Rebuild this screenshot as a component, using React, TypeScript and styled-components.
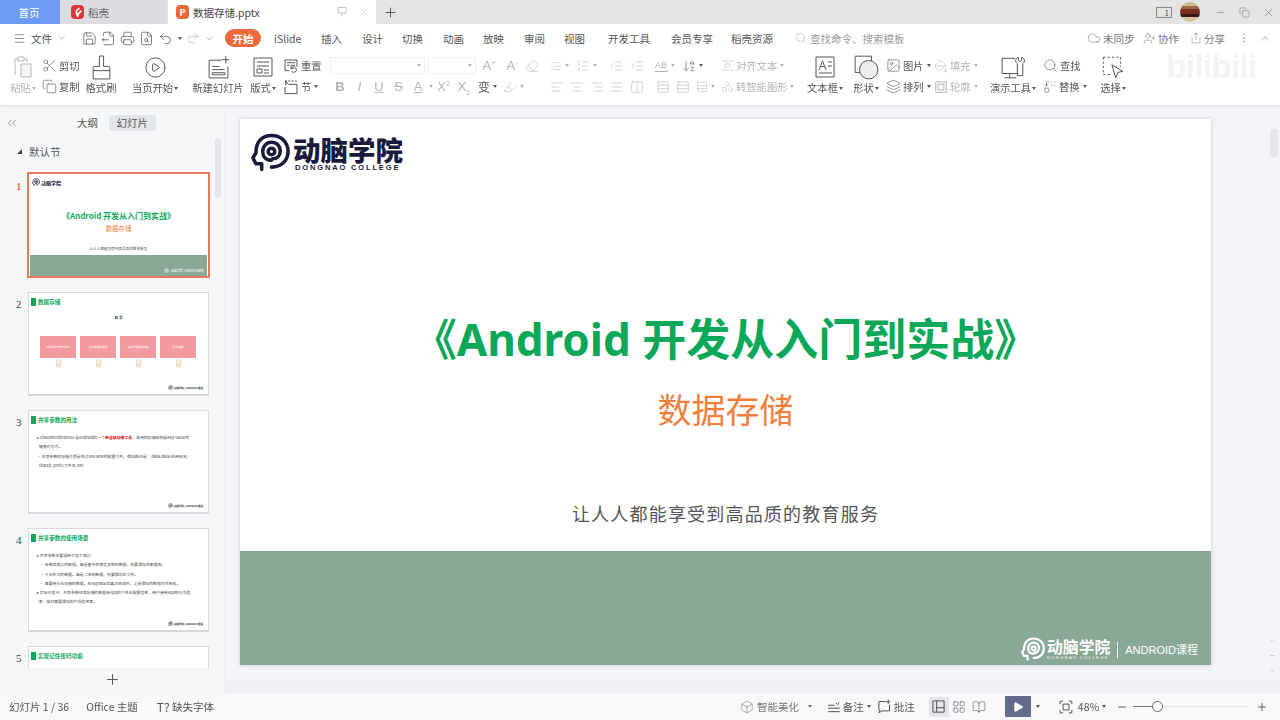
import React from "react";
import styled, { createGlobalStyle } from "styled-components";
import {
  Menu, Save, FileOutput, Printer, FileSearch, Undo2, Redo2, ChevronDown, ChevronUp, Scissors, Copy,
  CirclePlay, Eraser, List, ListOrdered, IndentDecrease,
  IndentIncrease, ArrowDownAZ, AlignLeft, AlignCenter, AlignRight, AlignJustify, Columns2, Rows3, Image, Layers,
  Search, Replace, Highlighter, Cloud, UserPlus, Share, MoreVertical,
  Minus, Plus, X, Box, LayoutGrid, BookOpen, Play, ChevronsLeft, Award,
  Shapes, AlignVerticalSpaceAround, PaintBucket,
} from "lucide-react";

const Global = createGlobalStyle`
  html, body { margin: 0; width: 1280px; height: 720px; overflow: hidden; background: #f3f4f7; }
  body, button { font-family: "Noto Sans CJK SC", "Noto Sans", sans-serif; }
  * { box-sizing: border-box; }
`;

const Page = styled.div`
  width: 1280px; height: 720px; display: flex; flex-direction: column; position: relative; overflow: hidden; color: #555;
  filter: blur(0.3px);
`;

/* ---------- tab bar ---------- */
const TabBar = styled.div`
  height: 24px; background: #e3e4e6; display: flex; align-items: stretch; flex: none;
`;
const Tab = styled.div<{ $w: number; $bg: string; $color?: string }>`
  width: ${p => p.$w}px; background: ${p => p.$bg}; color: ${p => p.$color || "#666"};
  display: flex; align-items: center; font-size: 10.5px; gap: 4px; flex: none;
`;
const HomeTab = styled(Tab)` justify-content: center; padding-right: 2px; `;
const PlainTab = styled(Tab)` padding-left: 11px; `;
const ActiveTab = styled(Tab)` margin-left: 1px; padding: 0 6px 0 8px; color: #444; `;
const TabBadge = styled.span<{ $bg: string }>`
  width: 13px; height: 14px; border-radius: 4px; background: ${p => p.$bg}; color: #fff; font-size: 9px; font-weight: 700;
  display: flex; align-items: center; justify-content: center; line-height: 1;
`;
const TabActions = styled.span`
  margin-left: auto; display: flex; gap: 10px; color: #c4c4c4; align-items: center;
`;
const NewTab = styled.span`
  width: 28px; display: flex; align-items: center; justify-content: center; color: #555;
`;
const WinArea = styled.div`
  margin-left: auto; display: flex; align-items: center; padding-right: 0; color: #666;
`;
const CountBox = styled.span`
  width: 16px; height: 11px; border: 1px solid #888; font-size: 8px; line-height: 9px; text-align: right; padding-right: 2px; color: #555;
`;
const Avatar = styled.span`
  width: 20px; height: 20px; border-radius: 50%; margin: 0 8px 0 8px;
  background: linear-gradient(#cdb78e 0 18%, #a06a48 18% 34%, #7a2e22 34% 62%, #3a1a18 62% 74%, #d8c59c 74%);
`;
const WinBtn = styled.span`
  width: 24px; display: flex; align-items: center; justify-content: center;
`;

/* ---------- menu row ---------- */
const MenuRow = styled.div`
  height: 28px; background: #fff; display: flex; align-items: center; flex: none; padding-left: 13px; font-size: 10.5px; color: #555;
`;
const MenuFile = styled.span`
  display: flex; align-items: center; gap: 5px; width: 69px; color: #555;
`;
const QuickIcons = styled.span`
  display: flex; align-items: center; gap: 4px; width: 143px; color: #555;
`;
const ActivePill = styled.span`
  width: 36px; height: 18px; border-radius: 9px; background: #ec6a3c; color: #fff; font-weight: 700;
  display: flex; align-items: center; justify-content: center; margin-right: 13px;
`;
const MenuItem = styled.span<{ $w?: number }>`
  width: ${p => p.$w || 40.3}px; flex: none; white-space: nowrap;
`;
const SearchBox = styled.span`
  display: flex; align-items: center; gap: 3px; color: #999; margin-left: 2px; width: 292px;
`;
const RightMenu = styled.span<{ $w: number }>`
  display: flex; align-items: center; gap: 2px; width: ${p => p.$w}px; flex: none; color: #777;
`;

/* ---------- ribbon ---------- */
const Ribbon = styled.div`
  height: 54px; background: #fff; border-bottom: 1px solid #e2e3e6; display: flex; flex: none; font-size: 10.3px; color: #555;
  box-shadow: 0 1px 2px rgba(0,0,0,.04); position: relative;
`;
const BigCol = styled.div<{ $w: number; $x: number; $off?: boolean }>`
  width: ${p => p.$w}px; margin-left: ${p => p.$x}px; flex: none; display: flex; flex-direction: column; align-items: center;
  color: ${p => p.$off ? "#b5b5b5" : "#555"}; padding-top: 3px; white-space: nowrap;
`;
const BigIcon = styled.div`
  height: 24px; display: flex; align-items: center; justify-content: center; color: inherit;
`;
const BigLabel = styled.div`
  margin-top: 1px; line-height: 16px; display: flex; align-items: center;
`;
const StackCol = styled.div<{ $w: number; $x: number }>`
  width: ${p => p.$w}px; margin-left: ${p => p.$x}px; flex: none; display: flex; flex-direction: column; gap: 4px; padding-top: 5px;
`;
const MiniRow = styled.div<{ $gap?: number }>`
  height: 17px; display: flex; align-items: center; gap: ${p => p.$gap ?? 2}px; white-space: nowrap;
`;
const Mini = styled.span<{ $off?: boolean; $w?: number }>`
  display: flex; align-items: center; gap: 2px; color: ${p => p.$off ? "#b4b4b4" : "#555"};
  ${p => p.$w ? `width: ${p.$w}px;` : ""} flex: none;
`;
const Caret = styled.span`
  width: 0; height: 0; border-left: 2px solid transparent; border-right: 2px solid transparent;
  border-top: 3px solid currentColor; margin-left: 1px; display: inline-block;
`;
const FontField = styled.span<{ $w: number }>`
  width: ${p => p.$w}px; height: 17px; border: 1px solid #f0f0f0; display: flex; align-items: center; justify-content: flex-end;
  padding-right: 3px; color: #b4b4b4; flex: none;
`;
const Letter = styled.span<{ $w: number; $weight?: number; $italic?: boolean; $line?: string }>`
  width: ${p => p.$w}px; flex: none; color: #b4b4b4; font-size: 13px; line-height: 17px; text-align: center;
  font-family: "Liberation Sans", sans-serif;
  font-weight: ${p => p.$weight || 400}; font-style: ${p => p.$italic ? "italic" : "normal"};
  text-decoration: ${p => p.$line || "none"};
  sup, sub { font-size: 7px; line-height: 0; }
`;
const ABMark = styled.span`
  font-size: 9px; line-height: 12px; border-bottom: 1px solid #b4b4b4; color: #b4b4b4; font-family: "Liberation Sans", sans-serif; width: 13px;
`;
const Glyph = styled.span`
  font-size: 12px; line-height: 14px; color: #555; margin-left: 4px;
`;

/* ---------- main ---------- */
const Main = styled.div`
  flex: 1; min-height: 0; display: flex;
`;
const Sidebar = styled.aside`
  width: 225px; flex: none; background: #f5f6f8; border-right: 1px solid #eceef1; display: flex; flex-direction: column;
`;
const SideHead = styled.div`
  height: 30px; display: flex; align-items: center; padding: 4px 0 0 5px; font-size: 10.5px; color: #555; flex: none;
`;
const SideTabs = styled.div`
  display: flex; align-items: center; margin-left: 58px; gap: 11px;
`;
const SideTab = styled.span<{ $on?: boolean }>`
  height: 16px; line-height: 16px; padding: 0 ${p => p.$on ? 7.5 : 0}px; border-radius: 3px; background: ${p => p.$on ? "#e3e5e8" : "transparent"};
`;
const SideBody = styled.div`
  flex: 1; min-height: 0; display: flex; overflow: hidden;
`;
const ThumbList = styled.div`
  width: 215px; flex: none; padding-left: 16px; overflow: hidden;
`;
const SectionTitle = styled.div`
  height: 38px; padding: 8px 0 0 1px; font-size: 10.5px; color: #555; display: flex; align-items: flex-start; gap: 7px; line-height: 16px;
`;
const Triangle = styled.span`
  width: 0; height: 0; margin-top: 5px; border-left: 5px solid transparent; border-bottom: 5px solid #444;
`;
const ThumbRow = styled.div`
  display: flex; height: 118px; align-items: flex-start;
`;
const ThumbNo = styled.div<{ $on?: boolean }>`
  width: 12px; font-size: 11px; font-weight: ${p => p.$on ? 700 : 400}; line-height: 14px; padding-top: 5px; flex: none;
  color: ${p => p.$on ? "#e9775a" : "#444"}; font-family: "Liberation Serif", serif;
`;
const Thumb = styled.div`
  width: 181px; height: 104px; background: #fff; flex: none; display: flex; flex-direction: column; overflow: hidden;
  border: 1px solid #d6d8dc; border-bottom-width: 2px;
`;
const ActiveThumb = styled(Thumb)`
  width: 183px; height: 106px; margin: -2px 0 0 -1px; border: 2px solid #e9775a;
`;
const ThumbLogo = styled.div`
  display: flex; align-items: center; gap: 1px; padding: 4px 0 0 3px; font-size: 5px; font-weight: 700; color: #1a1b3c; line-height: 7px;
`;
const ThumbTitle = styled.div`
  margin-top: 24px; text-align: center; font-size: 8px; font-weight: 700; color: #0aa858; line-height: 11px; white-space: nowrap;
`;
const ThumbSub = styled.div`
  margin-top: 3px; text-align: center; font-size: 6.4px; color: #f0803c; line-height: 9px;
`;
const ThumbSlogan = styled.div`
  margin-top: 13px; text-align: center; font-size: 3.6px; color: #555; line-height: 5px;
`;
const ThumbBand = styled.div`
  margin: auto 1px 0; height: 21px; background: #89a896; display: flex; align-items: flex-end; justify-content: flex-end;
  color: #fff; font-size: 3px; padding: 0 3px 3px 0; gap: 2px;
`;
const ThumbHead = styled.div`
  display: flex; align-items: center; gap: 2px; padding: 5px 0 0 2px; font-size: 5.6px; font-weight: 700; color: #0aa858; line-height: 8px;
`;
const GreenMark = styled.span`
  width: 5px; height: 8px; background: #0aa858;
`;
const Toc = styled.div`
  text-align: center; font-size: 3.6px; font-weight: 700; color: #333; margin-top: 9px; line-height: 5px;
`;
const CardRow = styled.div`
  display: flex; justify-content: flex-start; gap: 4px; padding: 0 0 0 11px; margin-top: 16px;
`;
const PinkCol = styled.div`
  width: 36px; display: flex; flex-direction: column; align-items: center; color: #f0a36a; gap: 1px;
`;
const PinkCard = styled.div`
  width: 36px; height: 22px; background: #f39aa0; color: #fff; font-size: 2.6px; display: flex; align-items: center; justify-content: center;
`;
const Bullets = styled.div`
  padding: 10px 10px 0 8px; font-size: 3.9px; line-height: 6.6px; color: #444;
  b { color: #d9141c; }
`;
const BulletLine = styled.div<{ $in?: boolean }>`
  padding-left: ${p => p.$in ? 3 : 0}px; margin-bottom: 2.7px; white-space: nowrap;
`;
const ThumbFoot = styled.div`
  margin-top: auto; padding: 0 5px 4px 0; display: flex; justify-content: flex-end; align-items: center; gap: 1px; font-size: 2.6px; color: #333; font-weight: 700;
`;
const SideScroll = styled.div`
  width: 10px; flex: none; padding: 2px 4px 0 0;
`;
const ScrollThumb = styled.div<{ $h: number; $w?: number }>`
  height: ${p => p.$h}px; width: ${p => p.$w || 6}px; background: #e4e5e9; border-radius: 3px;
`;
const AddBar = styled.div`
  height: 25px; flex: none; display: flex; align-items: center; justify-content: center; color: #555; padding-bottom: 2px;
`;

const Stage = styled.div`
  flex: 1; min-width: 0; background: #f3f4f7; display: flex; flex-direction: column;
`;
const StageRow = styled.div`
  flex: 1; min-height: 0; display: flex;
`;
const SlideArea = styled.div`
  width: 1043px; flex: none; padding: 13px 0 0 15px;
`;
const Slide = styled.section`
  width: 971px; height: 546px; background: #fff; box-shadow: 0 0 4px rgba(0,0,0,.18); display: flex; flex-direction: column;
`;
const LogoRow = styled.div`
  padding: 14px 0 0 11px; display: flex; align-items: flex-start; gap: 3px; height: 53px;
`;
const LogoText = styled.div`
  display: flex; flex-direction: column; color: #1a1b3c; padding-top: 1px;
`;
const LogoCn = styled.div`
  font-size: 27.5px; line-height: 30px; font-weight: 900;
`;
const LogoEn = styled.div`
  font-size: 7.5px; line-height: 7px; font-weight: 700; letter-spacing: 1.85px; margin-left: 2px; font-family: "Liberation Sans", sans-serif; white-space: nowrap;
`;
const Title = styled.h1`
  margin: 142px 0 0; text-align: center; font: 700 44px/50px "Noto Sans", "Noto Sans CJK SC", sans-serif; color: #0aa858; white-space: nowrap;
`;
const Subtitle = styled.div`
  margin-top: 25px; text-align: center; font-size: 34px; line-height: 40px; color: #f0803c;
`;
const Slogan = styled.div`
  margin-top: 71px; text-align: center; font-size: 18px; line-height: 26px; color: #555; letter-spacing: 1.2px;
`;
const Band = styled.div`
  margin-top: auto; height: 114px; background: #89a896; display: flex; align-items: flex-end; justify-content: flex-end;
  padding: 0 13px 4px 0; color: #fff;
`;
const BandLogo = styled.div`
  display: flex; align-items: center; gap: 2px;
`;
const BandCn = styled.div`
  display: flex; flex-direction: column;
`;
const BandCnText = styled.span`
  font-size: 15.8px; line-height: 17px; font-weight: 700; white-space: nowrap;
`;
const BandEn = styled.span`
  font-size: 4px; line-height: 5px; letter-spacing: 1.4px; font-family: "Liberation Sans", sans-serif; white-space: nowrap;
`;
const BandRule = styled.span`
  width: 1px; height: 16px; background: #fff; margin: 0 7px 3px 7px;
`;
const BandCourse = styled.span`
  font-size: 11px; line-height: 20px; margin-bottom: 1px; font-family: "Liberation Sans", "Noto Sans CJK SC", sans-serif;
`;
const RightScroll = styled.div`
  flex: 1; display: flex; flex-direction: column; align-items: flex-end; padding: 23px 2px 0 0; color: #888;
`;
const ScrollBtns = styled.div`
  margin-top: auto; display: flex; flex-direction: column; align-items: center; gap: 8px; padding: 0 0 7px; margin-right: 2px; color: #999;
`;
const HScroll = styled.div`
  height: 12px; flex: none; background: #eef0f3;
`;

/* ---------- status bar ---------- */
const Status = styled.footer`
  height: 27px; flex: none; background: #f7f8fa; display: flex; align-items: center; font-size: 10.5px; color: #555; padding-left: 9px;
`;
const StatusItem = styled.span<{ $x?: number; $off?: boolean; $gap?: number }>`
  display: flex; align-items: center; gap: ${p => p.$gap ?? 2}px; margin-left: ${p => p.$x || 0}px; flex: none; white-space: nowrap; color: ${p => p.$off ? "#777" : "#555"};
`;
const ViewBtn = styled.span<{ $on?: boolean }>`
  width: 20px; height: 20px; border-radius: 2px; display: flex; align-items: center; justify-content: center;
  background: ${p => p.$on ? "#e3e5e8" : "transparent"}; flex: none;
`;
const PlayBtn = styled.span`
  width: 26px; height: 21px; background: #656b8a; color: #fff; display: flex; align-items: center; justify-content: center; margin-left: 16px; flex: none;
`;
const Track = styled.span`
  width: 115px; height: 1px; background: #e2e3e6; margin-left: 5px; position: relative; display: block; flex: none;
`;
const TrackFill = styled.span`
  display: block; width: 20px; height: 1px; background: #777;
`;
const Knob = styled.span`
  position: absolute; left: 19px; top: -5px; width: 11px; height: 11px; border-radius: 50%; border: 1px solid #666; background: #fff;
`;

/* watermark overlay */
const Watermark = styled.div`
  position: absolute; left: 1166px; top: 46px; font: 700 34px/40px "Liberation Sans", sans-serif; color: rgba(225,225,225,.4); pointer-events: none; letter-spacing: -1px;
`;

const Logo = ({ size, color }: { size: number; color: string }) => (
  <svg width={size} height={size} viewBox="0 0 40 39" fill="none" stroke={color} strokeWidth={3.6} strokeLinejoin="round" strokeLinecap="round" style={{ flex: "none" }}>
    <path d="M11 37V31H5L2 25L5 20C5 9 11 2 21 2C31 2 38 9 38 18.5C38 28 31 34.5 21 34.5" />
    <path d="M21 27.5C15 27.5 12 23.5 12 18.5C12 13 16 9 21 9C26.5 9 30 13 30 18C30 23 26.5 26 22 26" />
    <circle cx="21" cy="18.5" r="3.4" />
  </svg>
);

const sz = 14, st = 1.2;
const I = (C: any, s = sz, w = st) => <C size={s} strokeWidth={w} />;

/* hand-drawn ribbon and status icons */
const Draw = ({ s = 24, children }: { s?: number; children: React.ReactNode }) => (
  <svg width={s} height={s} viewBox="0 0 24 24" fill="none" stroke="currentColor" strokeWidth={24 / s} style={{ flex: "none" }}>{children}</svg>
);
const PasteIcon = () => <Draw><path d="M4 20V4h3V2h6v2h3v3" /><path d="M7 4v2h6V4" /><path d="M10 9h10v13H10z" fill="#f4f4f4" /></Draw>;
const BrushIcon = () => <Draw s={25}><path d="M10 1h4v10h5a1 1 0 0 1 1 1v3H4v-3a1 1 0 0 1 1-1h5z" /><path d="M4 15v8h16v-8" /></Draw>;
const NewSlideIcon = () => <Draw s={25}><path d="M15 5H3v17h18V11" /><path d="M19 1v7M15.5 4.5h7" /><path d="M6 11h7M6 14h12M6 17h12v2H6z" /></Draw>;
const LayoutIcon = () => <Draw s={24}><path d="M3 3h18v18H3z" /><path d="M6 7h12M6 11h12" /><path d="M6 14h5v4H6zM13 15h5M13 18h5" /></Draw>;
const ResetIcon = () => <Draw s={16}><path d="M9 19H3V3h18v10" /><path d="M6 7h12M6 11h4M12 11h6" /><path d="M13 20a4 4 0 1 0 1-6l-2 2M12 12v4h4" /></Draw>;
const SectionIcon = () => <Draw s={16}><path d="M3 3h18" strokeDasharray="3 2" /><path d="M4 3l3 3-3 3z" /><path d="M8 8h13v14H3V12" /></Draw>;
const TextBoxIcon = () => <Draw s={24}><path d="M3 2h18v20H3z" /><path d="M6 15l3.5-9 3.500 9M7.500 11.500h4M15 7h4M15 11h4M6 18h13" /></Draw>;
const ShapeIcon = () => <Draw s={26}><path d="M2 2h15v5M2 2v15h5" /><circle cx="14.500" cy="14.500" r="8.500" fill="#eee" /></Draw>;
const DemoIcon = () => <Draw s={26}><path d="M14 4H2v14h15" /><path d="M9 18v4M4 22h11" /><path d="M17 3v3l1.500 1L20 6V3c2 .5 2.500 2 2.500 3.500S21 9 21 9v11h-5V9s-1.500-1-1.500-2.500S15 3.500 17 3z" /></Draw>;
const SelectIcon = () => <Draw s={26}><path d="M3 3h16v9M3 3v16h7" strokeDasharray="2 2" /><path d="M11 10l10 6-4.500 1-2 5z" /></Draw>;
const NoteIcon = () => <Draw s={14}><path d="M2 9h11M2 14h20M2 20h20" /><path d="M15 5l3 3 3-4" /></Draw>;
const CommentIcon = () => <Draw s={15}><path d="M14 4H3v15h2l-2 3 5-3h12V9" /><path d="M18 1v7M14.500 4.500h7" /></Draw>;
const NormalViewIcon = () => <Draw s={15}><path d="M3 3h18v18H3zM9 3v18M9 14h12" /></Draw>;
const FitIcon = () => <Draw s={14}><path d="M2 7V2h5M17 2h5v5M22 17v5h-5M7 22H2v-5" /><path d="M7 7h10v10H7z" /></Draw>;
const PinIcon = () => <Draw s={12}><path d="M4 3h16v11H4zM12 14v7" /></Draw>;
const OutlineIcon = () => <Draw s={14}><path d="M3 3h18v18H3z" /><path d="M7 7h10v10H7z" /></Draw>;
const ShellIcon = () => <Draw s={10}><path d="M16 3C9 6 5 11 11 22c1-6 5-10 9-13" strokeWidth={4} /></Draw>;

const slidesTop = ["数据存储", "共享参数的用法", "共享参数的使用场景", "实现记住密码功能"];

function MiniFoot() {
  return (
    <ThumbFoot>
      <Logo size={5} color="#333" />
      <span>动脑学院 | ANDROID课程</span>
    </ThumbFoot>
  );
}

export default function App() {
  return (
    <Page>
      <Global />
      <TabBar>
        <HomeTab $w={60} $bg="#6d9cf5" $color="#fff">首页</HomeTab>
        <PlainTab $w={107} $bg="#dcdde0">
          <TabBadge $bg="#e0333c"><ShellIcon /></TabBadge>稻壳
        </PlainTab>
        <ActiveTab $w={208} $bg="#fff">
          <TabBadge $bg="#ea6a3a">P</TabBadge>数据存储.pptx
          <TabActions><PinIcon />{I(X, 12, 1)}</TabActions>
        </ActiveTab>
        <NewTab>{I(Plus, 15, 1.6)}</NewTab>
        <WinArea>
          <CountBox>1</CountBox>
          <Avatar />
          <WinBtn>{I(Minus, 11, 1)}</WinBtn>
          <WinBtn>{I(Copy, 11, 1)}</WinBtn>
          <WinBtn>{I(X, 13, 1)}</WinBtn>
        </WinArea>
      </TabBar>

      <MenuRow>
        <MenuFile>{I(Menu, 13, 1.2)}文件{I(ChevronDown, 10, 1)}</MenuFile>
        <QuickIcons>
          {I(Save, 15)}{I(FileOutput, 15)}{I(Printer, 15)}{I(FileSearch, 15)}{I(Undo2, 15)}<Caret />
          <Mini $off>{I(Redo2, 14)}</Mini>
          <Mini>{I(ChevronDown, 11, 1)}</Mini>
        </QuickIcons>
        <ActivePill>开始</ActivePill>
        <MenuItem $w={47}>iSlide</MenuItem>
        <MenuItem $w={41}>插入</MenuItem>
        <MenuItem $w={40}>设计</MenuItem>
        <MenuItem $w={41}>切换</MenuItem>
        <MenuItem $w={40}>动画</MenuItem>
        <MenuItem $w={41}>放映</MenuItem>
        <MenuItem $w={40}>审阅</MenuItem>
        <MenuItem $w={44}>视图</MenuItem>
        <MenuItem $w={63}>开发工具</MenuItem>
        <MenuItem $w={60}>会员专享</MenuItem>
        <MenuItem $w={62}>稻壳资源</MenuItem>
        <SearchBox>{I(Search, 12, 1)}查找命令、搜索模板</SearchBox>
        <RightMenu $w={56}>{I(Cloud, 14, 1)}未同步</RightMenu>
        <RightMenu $w={47}>{I(UserPlus, 13, 1)}协作</RightMenu>
        <RightMenu $w={48}>{I(Share, 12, 1)}分享</RightMenu>
        <RightMenu $w={20}>{I(MoreVertical, 12, 1)}</RightMenu>
        <RightMenu $w={14}>{I(ChevronUp, 15, 1)}</RightMenu>
      </MenuRow>

      <Ribbon>
        <BigCol $w={30} $x={8} $off><BigIcon><PasteIcon /></BigIcon><BigLabel>粘贴<Caret /></BigLabel></BigCol>
        <StackCol $w={40} $x={4}>
          <MiniRow><Mini>{I(Scissors, 15, 1)}剪切</Mini></MiniRow>
          <MiniRow><Mini>{I(Copy, 15, 1)}复制</Mini></MiniRow>
        </StackCol>
        <BigCol $w={34} $x={2}><BigIcon><BrushIcon /></BigIcon><BigLabel>格式刷</BigLabel></BigCol>
        <BigCol $w={48} $x={13}><BigIcon>{I(CirclePlay, 23, 1)}</BigIcon><BigLabel>当页开始<Caret /></BigLabel></BigCol>
        <BigCol $w={54} $x={12}><BigIcon><NewSlideIcon /></BigIcon><BigLabel>新建幻灯片</BigLabel></BigCol>
        <BigCol $w={28} $x={4}><BigIcon><LayoutIcon /></BigIcon><BigLabel>版式<Caret /></BigLabel></BigCol>
        <StackCol $w={42} $x={6}>
          <MiniRow><Mini><ResetIcon />重置</Mini></MiniRow>
          <MiniRow><Mini><SectionIcon />节<Caret /></Mini></MiniRow>
        </StackCol>
        <StackCol $w={218} $x={5}>
          <MiniRow $gap={3}>
            <FontField $w={95}><Caret /></FontField>
            <FontField $w={48}><Caret /></FontField>
            <Letter $w={20}>A<sup>+</sup></Letter>
            <Letter $w={20}>A<sup>-</sup></Letter>
            <Mini $off>{I(Eraser, 14, 1)}</Mini>
          </MiniRow>
          <MiniRow $gap={0}>
            <Letter $w={20} $weight={700}>B</Letter>
            <Letter $w={19} $italic>I</Letter>
            <Letter $w={20} $line="underline">U</Letter>
            <Letter $w={19} $line="line-through">S</Letter>
            <Letter $w={20} $line="underline">A</Letter><Mini $off><Caret /></Mini>
            <Letter $w={21}>X<sup>2</sup></Letter>
            <Letter $w={20}>X<sub>2</sub></Letter>
            <Mini $w={29}><Glyph>变</Glyph><Caret /></Mini>
            <Mini $off>{I(Highlighter, 14, 1)}<Caret /></Mini>
          </MiniRow>
        </StackCol>
        <StackCol $w={245} $x={2}>
          <MiniRow $gap={7}>
            <Mini $off $w={19}>{I(List, 14, 1)}<Caret /></Mini>
            <Mini $off $w={26}>{I(ListOrdered, 14, 1)}<Caret /></Mini>
            <Mini $off>{I(IndentDecrease, 14, 1)}</Mini>
            <Mini $off $w={18}>{I(IndentIncrease, 14, 1)}</Mini>
            <Mini $off $w={20}><ABMark>AB</ABMark><Caret /></Mini>
            <Mini $w={32}>{I(ArrowDownAZ, 14, 1)}<Caret /></Mini>
            <Mini $off>{I(AlignVerticalSpaceAround, 13, 1)}对齐文本<Caret /></Mini>
          </MiniRow>
          <MiniRow $gap={6}>
            <Mini $off>{I(AlignLeft, 14, 1)}</Mini>
            <Mini $off>{I(AlignCenter, 14, 1)}</Mini>
            <Mini $off>{I(AlignRight, 14, 1)}</Mini>
            <Mini $off>{I(AlignJustify, 14, 1)}</Mini>
            <Mini $off $w={20}>{I(Columns2, 14, 1)}</Mini>
            <Mini $off>{I(Rows3, 14, 1)}</Mini>
            <Mini $off>{I(Rows3, 14, 1)}</Mini>
            <Mini $off $w={19}>{I(Rows3, 14, 1)}<Caret /></Mini>
            <Mini $off>{I(Shapes, 13, 1)}转智能图形<Caret /></Mini>
          </MiniRow>
        </StackCol>
        <BigCol $w={36} $x={12}><BigIcon><TextBoxIcon /></BigIcon><BigLabel>文本框<Caret /></BigLabel></BigCol>
        <BigCol $w={30} $x={8}><BigIcon><ShapeIcon /></BigIcon><BigLabel>形状<Caret /></BigLabel></BigCol>
        <StackCol $w={48} $x={5}>
          <MiniRow><Mini>{I(Image, 15, 1)}图片<Caret /></Mini></MiniRow>
          <MiniRow><Mini>{I(Layers, 15, 1)}排列<Caret /></Mini></MiniRow>
        </StackCol>
        <StackCol $w={46} $x={0}>
          <MiniRow><Mini $off>{I(PaintBucket, 14, 1)}填充<Caret /></Mini></MiniRow>
          <MiniRow><Mini $off><OutlineIcon />轮廓<Caret /></Mini></MiniRow>
        </StackCol>
        <BigCol $w={46} $x={10}><BigIcon><DemoIcon /></BigIcon><BigLabel>演示工具<Caret /></BigLabel></BigCol>
        <StackCol $w={46} $x={7}>
          <MiniRow><Mini>{I(Search, 15, 1)}查找</Mini></MiniRow>
          <MiniRow><Mini>{I(Replace, 14, 1)}替换<Caret /></Mini></MiniRow>
        </StackCol>
        <BigCol $w={30} $x={9}><BigIcon><SelectIcon /></BigIcon><BigLabel>选择<Caret /></BigLabel></BigCol>
      </Ribbon>

      <Main>
        <Sidebar>
          <SideHead>
            {I(ChevronsLeft, 14, 1)}
            <SideTabs>
              <SideTab>大纲</SideTab>
              <SideTab $on>幻灯片</SideTab>
            </SideTabs>
          </SideHead>
          <SideBody>
            <ThumbList>
              <SectionTitle><Triangle />默认节</SectionTitle>
              <ThumbRow>
                <ThumbNo $on>1</ThumbNo>
                <ActiveThumb>
                  <ThumbLogo><Logo size={8} color="#1a1b3c" />动脑学院</ThumbLogo>
                  <ThumbTitle>《Android 开发从入门到实战》</ThumbTitle>
                  <ThumbSub>数据存储</ThumbSub>
                  <ThumbSlogan>让人人都能享受到高品质的教育服务</ThumbSlogan>
                  <ThumbBand><Logo size={5} color="#fff" />动脑学院 | ANDROID课程</ThumbBand>
                </ActiveThumb>
              </ThumbRow>
              <ThumbRow>
                <ThumbNo>2</ThumbNo>
                <Thumb>
                  <ThumbHead><GreenMark />{slidesTop[0]}</ThumbHead>
                  <Toc>目 录</Toc>
                  <CardRow>
                    {["SharedPreferences", "共享参数的使用", "SQLite数据库存储", "文件存储"].map(t => (
                      <PinkCol key={t}>
                        <PinkCard>{t}</PinkCard>
                        <Award size={9} strokeWidth={1.4} />
                      </PinkCol>
                    ))}
                  </CardRow>
                  <MiniFoot />
                </Thumb>
              </ThumbRow>
              <ThumbRow>
                <ThumbNo>3</ThumbNo>
                <Thumb>
                  <ThumbHead><GreenMark />{slidesTop[1]}</ThumbHead>
                  <Bullets>
                    <BulletLine>▸ SharedPreferences 是Android的一个<b>轻量级存储工具</b>，采用的存储结构是Key-Value的</BulletLine>
                    <BulletLine>&nbsp;&nbsp;键值对方式。</BulletLine>
                    <BulletLine>• 共享参数的存储介质是符合XML规范的配置文件。保存路径是：/data/data/应用包名/</BulletLine>
                    <BulletLine>&nbsp;&nbsp;shared_prefs/文件名.xml</BulletLine>
                  </Bullets>
                  <MiniFoot />
                </Thumb>
              </ThumbRow>
              <ThumbRow>
                <ThumbNo>4</ThumbNo>
                <Thumb>
                  <ThumbHead><GreenMark />{slidesTop[2]}</ThumbHead>
                  <Bullets>
                    <BulletLine>▸ 共享参数主要适用于如下场合：</BulletLine>
                    <BulletLine $in>• 简单且孤立的数据。若是复杂且相互关联的数据，则要保存在数据库。</BulletLine>
                    <BulletLine $in>• 文本形式的数据。若是二进制数据，则要保存在文件。</BulletLine>
                    <BulletLine $in>• 需要持久化存储的数据。在App退出后再次启动时，之前保存的数据仍然有效。</BulletLine>
                    <BulletLine>▸ 实际开发中，共享参数经常存储的数据有App的个性化配置信息、用户使用App的行为信</BulletLine>
                    <BulletLine>&nbsp;&nbsp;息、临时需要保存的片段信息等。</BulletLine>
                  </Bullets>
                  <MiniFoot />
                </Thumb>
              </ThumbRow>
              <ThumbRow>
                <ThumbNo>5</ThumbNo>
                <Thumb>
                  <ThumbHead><GreenMark />{slidesTop[3]}</ThumbHead>
                </Thumb>
              </ThumbRow>
            </ThumbList>
            <SideScroll><ScrollThumb $h={60} /></SideScroll>
          </SideBody>
          <AddBar>{I(Plus, 17, 1.4)}</AddBar>
        </Sidebar>

        <Stage>
          <StageRow>
            <SlideArea>
              <Slide>
                <LogoRow>
                  <Logo size={39} color="#1a1b3c" />
                  <LogoText>
                    <LogoCn>动脑学院</LogoCn>
                    <LogoEn>DONGNAO COLLEGE</LogoEn>
                  </LogoText>
                </LogoRow>
                <Title>《Android 开发从入门到实战》</Title>
                <Subtitle>数据存储</Subtitle>
                <Slogan>让人人都能享受到高品质的教育服务</Slogan>
                <Band>
                  <BandLogo>
                    <Logo size={24} color="#fff" />
                    <BandCn>
                      <BandCnText>动脑学院</BandCnText>
                      <BandEn>DONGNAO COLLEGE</BandEn>
                    </BandCn>
                  </BandLogo>
                  <BandRule />
                  <BandCourse>ANDROID课程</BandCourse>
                </Band>
              </Slide>
            </SlideArea>
            <RightScroll>
              <ScrollThumb $h={28} $w={8} />
              <ScrollBtns>
                {I(ChevronUp, 7, 1.4)}
                {I(Minus, 7, 1.4)}
                {I(ChevronDown, 7, 1.4)}
              </ScrollBtns>
            </RightScroll>
          </StageRow>
          <HScroll />
        </Stage>
      </Main>

      <Status>
        <StatusItem>幻灯片 1 / 36</StatusItem>
        <StatusItem $x={17}>Office 主题</StatusItem>
        <StatusItem $x={15} $gap={0}><Glyph>T?</Glyph>&nbsp;缺失字体</StatusItem>
        <StatusItem $x={526} $off $gap={3}>{I(Box, 14, 1)}智能美化&nbsp;&nbsp;<Caret /></StatusItem>
        <StatusItem $x={15}><NoteIcon />备注<Caret /></StatusItem>
        <StatusItem $x={6}><CommentIcon />批注</StatusItem>
        <StatusItem $x={14} $gap={0}>
          <ViewBtn $on><NormalViewIcon /></ViewBtn>
          <ViewBtn>{I(LayoutGrid, 14, 1)}</ViewBtn>
          <ViewBtn>{I(BookOpen, 14, 1)}</ViewBtn>
        </StatusItem>
        <PlayBtn><Play size={12} fill="#fff" strokeWidth={1} /></PlayBtn>
        <StatusItem $x={4}><Caret /></StatusItem>
        <StatusItem $x={19}><FitIcon /></StatusItem>
        <StatusItem $x={5}>48%<Caret /></StatusItem>
        <StatusItem $x={10}>{I(Minus, 12, 1.8)}</StatusItem>
        <Track><TrackFill /><Knob /></Track>
        <StatusItem $x={8}>{I(Plus, 12, 1.8)}</StatusItem>
      </Status>
      <Watermark>bilibili</Watermark>
    </Page>
  );
}
